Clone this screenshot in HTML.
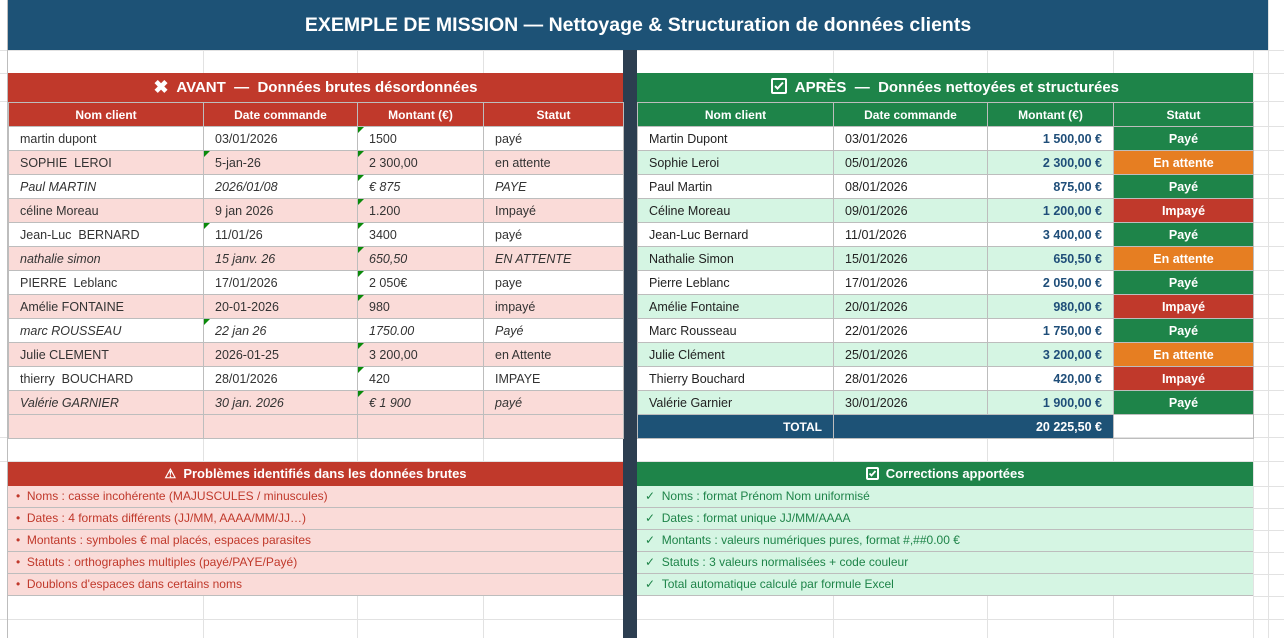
<!DOCTYPE html>
<html><head><meta charset="utf-8">
<style>
*{margin:0;padding:0;box-sizing:border-box}
body{width:1284px;height:638px;overflow:hidden;background:#fff;font-family:"Liberation Sans",Arial,sans-serif;position:relative}
.h{position:absolute;left:0;width:1284px;height:1px;background:#e2e2e2}
.hr{position:absolute;left:1253px;width:31px;height:1px;background:#e2e2e2}
.v{position:absolute;top:0;width:1px;height:638px;background:#e2e2e2}
.title{position:absolute;left:8px;top:0;width:1260px;height:50px;background:#1d5276;color:#fff;font-weight:bold;font-size:19.5px;text-align:center;line-height:50px}
.sep{position:absolute;left:623px;top:50px;width:14px;height:588px;background:#2c3e50}
.band{position:absolute;height:29px;color:#fff;font-weight:bold;font-size:15px;text-align:center;line-height:29px}
table{position:absolute;border-collapse:collapse;table-layout:fixed;font-size:12.5px}
td{height:24px;border:1px solid #bdbdbd;padding:0 11px;white-space:nowrap;overflow:hidden;color:#333;position:relative}
th{height:24px;border:1px solid #bdbdbd;color:#fff;font-size:12px;font-weight:bold}
.L th{background:#c0392b}
.R th{background:#1e8449}
.p td{background:#fadbd8}
.g td{background:#d5f5e3}
.i td{font-style:italic}
.m::before{content:"";position:absolute;left:0;top:0;border-top:6px solid #0a8a0a;border-right:6px solid transparent}
.R td{color:#222}
.R td.a{text-align:right;font-weight:bold;color:#1f4e79}
.R td.s{text-align:center;color:#fff;font-weight:bold}
.ok{background:#1e8449!important}.wt{background:#e67e22!important}.ko{background:#c0392b!important}
.list{position:absolute;font-size:12px}
.list div{height:22px;line-height:21px;border-bottom:1px solid #bdbdbd;padding-left:8px}
.lr div{background:#fadbd8;color:#c0392b}
.lg div{background:#d5f5e3;color:#1e8449}
</style></head><body>
<div class="h" style="top:50px"></div><div class="h" style="top:73px"></div><div class="h" style="top:101px"></div>
<div class="h" style="top:437px"></div><div class="h" style="top:461px"></div><div class="h" style="top:619px"></div>
<div class="hr" style="top:126px"></div><div class="hr" style="top:150px"></div><div class="hr" style="top:174px"></div><div class="hr" style="top:198px"></div><div class="hr" style="top:222px"></div><div class="hr" style="top:246px"></div><div class="hr" style="top:270px"></div><div class="hr" style="top:294px"></div><div class="hr" style="top:318px"></div><div class="hr" style="top:342px"></div><div class="hr" style="top:366px"></div><div class="hr" style="top:390px"></div><div class="hr" style="top:414px"></div><div class="hr" style="top:486px"></div><div class="hr" style="top:508px"></div><div class="hr" style="top:530px"></div><div class="hr" style="top:552px"></div><div class="hr" style="top:574px"></div><div class="hr" style="top:596px"></div>
<div class="v" style="left:7px;background:#bdbdbd"></div><div class="v" style="left:203px"></div><div class="v" style="left:357px"></div><div class="v" style="left:483px"></div>
<div class="v" style="left:833px"></div><div class="v" style="left:987px"></div><div class="v" style="left:1113px"></div><div class="v" style="left:1253px"></div><div class="v" style="left:1268px"></div>
<div class="title">EXEMPLE DE MISSION — Nettoyage &amp; Structuration de données clients</div>
<div class="sep"></div>
<div class="band" style="left:8px;top:73px;width:615px;background:#c0392b"><span style="font-size:18px;vertical-align:-1px">✖</span>&nbsp; AVANT &nbsp;—&nbsp; Données brutes désordonnées</div>
<div class="band" style="left:637px;top:73px;width:616px;background:#1e8449"><span style="display:inline-block;width:16px;height:16px;border:2px solid #fff;border-radius:2px;vertical-align:-2px;position:relative"><svg width="12" height="12" style="position:absolute;left:0;top:0"><path d="M2 6l2.5 2.5 5.5-6" stroke="#fff" stroke-width="2" fill="none"/></svg></span>&nbsp; APRÈS &nbsp;—&nbsp; Données nettoyées et structurées</div>

<table class="L" style="left:8px;top:102px;width:615px">
<col style="width:195px"><col style="width:154px"><col style="width:126px"><col style="width:140px">
<tr><th>Nom client</th><th>Date commande</th><th>Montant (€)</th><th>Statut</th></tr>
<tr><td>martin dupont</td><td>03/01/2026</td><td class="m">1500</td><td>payé</td></tr>
<tr class="p"><td>SOPHIE&nbsp; LEROI</td><td class="m">5-jan-26</td><td class="m">2 300,00</td><td>en attente</td></tr>
<tr class="i"><td>Paul MARTIN</td><td>2026/01/08</td><td class="m">€ 875</td><td>PAYE</td></tr>
<tr class="p"><td>céline Moreau</td><td>9 jan 2026</td><td class="m">1.200</td><td>Impayé</td></tr>
<tr><td>Jean-Luc&nbsp; BERNARD</td><td class="m">11/01/26</td><td class="m">3400</td><td>payé</td></tr>
<tr class="p i"><td>nathalie simon</td><td>15 janv. 26</td><td class="m">650,50</td><td>EN ATTENTE</td></tr>
<tr><td>PIERRE&nbsp; Leblanc</td><td>17/01/2026</td><td class="m">2 050€</td><td>paye</td></tr>
<tr class="p"><td>Amélie FONTAINE</td><td>20-01-2026</td><td class="m">980</td><td>impayé</td></tr>
<tr class="i"><td>marc ROUSSEAU</td><td class="m">22 jan 26</td><td>1750.00</td><td>Payé</td></tr>
<tr class="p"><td>Julie CLEMENT</td><td>2026-01-25</td><td class="m">3 200,00</td><td>en Attente</td></tr>
<tr><td>thierry&nbsp; BOUCHARD</td><td>28/01/2026</td><td class="m">420</td><td>IMPAYE</td></tr>
<tr class="p i"><td>Valérie GARNIER</td><td>30 jan. 2026</td><td class="m">€ 1 900</td><td>payé</td></tr>
<tr class="p"><td></td><td></td><td></td><td></td></tr>
</table>

<table class="R" style="left:637px;top:102px;width:616px">
<col style="width:196px"><col style="width:154px"><col style="width:126px"><col style="width:140px">
<tr><th>Nom client</th><th>Date commande</th><th>Montant (€)</th><th>Statut</th></tr>
<tr><td>Martin Dupont</td><td>03/01/2026</td><td class="a">1 500,00 €</td><td class="s ok">Payé</td></tr>
<tr class="g"><td>Sophie Leroi</td><td>05/01/2026</td><td class="a">2 300,00 €</td><td class="s wt">En attente</td></tr>
<tr><td>Paul Martin</td><td>08/01/2026</td><td class="a">875,00 €</td><td class="s ok">Payé</td></tr>
<tr class="g"><td>Céline Moreau</td><td>09/01/2026</td><td class="a">1 200,00 €</td><td class="s ko">Impayé</td></tr>
<tr><td>Jean-Luc Bernard</td><td>11/01/2026</td><td class="a">3 400,00 €</td><td class="s ok">Payé</td></tr>
<tr class="g"><td>Nathalie Simon</td><td>15/01/2026</td><td class="a">650,50 €</td><td class="s wt">En attente</td></tr>
<tr><td>Pierre Leblanc</td><td>17/01/2026</td><td class="a">2 050,00 €</td><td class="s ok">Payé</td></tr>
<tr class="g"><td>Amélie Fontaine</td><td>20/01/2026</td><td class="a">980,00 €</td><td class="s ko">Impayé</td></tr>
<tr><td>Marc Rousseau</td><td>22/01/2026</td><td class="a">1 750,00 €</td><td class="s ok">Payé</td></tr>
<tr class="g"><td>Julie Clément</td><td>25/01/2026</td><td class="a">3 200,00 €</td><td class="s wt">En attente</td></tr>
<tr><td>Thierry Bouchard</td><td>28/01/2026</td><td class="a">420,00 €</td><td class="s ko">Impayé</td></tr>
<tr class="g"><td>Valérie Garnier</td><td>30/01/2026</td><td class="a">1 900,00 €</td><td class="s ok">Payé</td></tr>
<tr><td style="background:#1d5276;color:#fff;font-weight:bold;text-align:right;font-size:12px">TOTAL</td><td colspan="2" style="background:#1d5276;color:#fff;font-weight:bold;text-align:right">20 225,50 €</td><td></td></tr>
</table>

<div class="band" style="left:8px;top:462px;width:615px;height:24px;line-height:24px;font-size:13px;background:#c0392b">⚠&nbsp; Problèmes identifiés dans les données brutes</div>
<div class="band" style="left:637px;top:462px;width:616px;height:24px;line-height:24px;font-size:13px;background:#1e8449"><span style="display:inline-block;width:13px;height:13px;border:2px solid #fff;border-radius:2px;vertical-align:-2px;position:relative"><svg width="9" height="9" style="position:absolute;left:0;top:0"><path d="M1.5 4.5l2 2 4-4.5" stroke="#fff" stroke-width="1.8" fill="none"/></svg></span>&nbsp; Corrections apportées</div>

<div class="list lr" style="left:8px;top:486px;width:615px">
<div>• &nbsp;Noms : casse incohérente (MAJUSCULES / minuscules)</div>
<div>• &nbsp;Dates : 4 formats différents (JJ/MM, AAAA/MM/JJ…)</div>
<div>• &nbsp;Montants : symboles € mal placés, espaces parasites</div>
<div>• &nbsp;Statuts : orthographes multiples (payé/PAYE/Payé)</div>
<div>• &nbsp;Doublons d'espaces dans certains noms</div>
</div>
<div class="list lg" style="left:637px;top:486px;width:616px">
<div>✓ &nbsp;Noms : format Prénom Nom uniformisé</div>
<div>✓ &nbsp;Dates : format unique JJ/MM/AAAA</div>
<div>✓ &nbsp;Montants : valeurs numériques pures, format #,##0.00 €</div>
<div>✓ &nbsp;Statuts : 3 valeurs normalisées + code couleur</div>
<div>✓ &nbsp;Total automatique calculé par formule Excel</div>
</div>
</body></html>
